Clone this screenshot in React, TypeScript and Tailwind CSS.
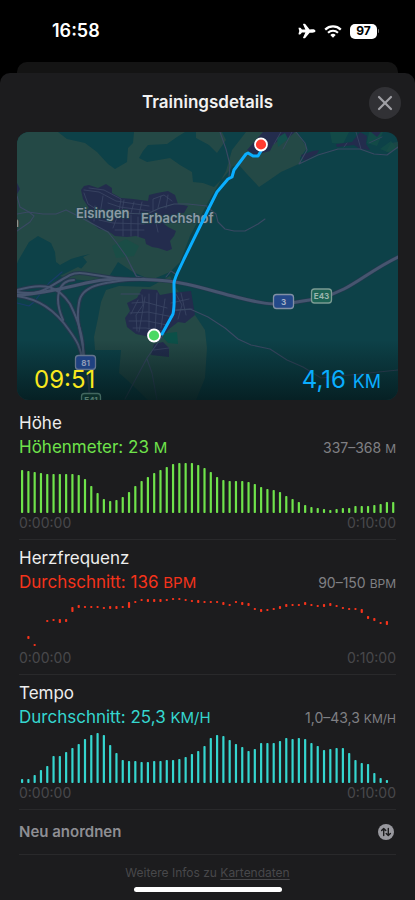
import { X } from 'lucide-react';
import { IoAirplane } from 'react-icons/io5';

type Range = [number, number, number];

const STEP = 6.29;
const CHART_HEIGHT = 54;

const elevation = [
  43, 42, 41, 40, 39, 39, 39, 39, 39, 38, 34, 27, 20, 14, 12, 13, 16, 21, 27, 32, 36, 40, 43, 46,
  49, 50, 50, 50, 48, 45, 41, 36, 33, 32, 32, 32, 31, 29, 26, 24, 23, 21, 17, 14, 11, 8, 6, 5, 4, 3,
  4, 5, 5, 7, 7, 7, 8, 9, 11, 11,
];

const tempo = [
  4, 4, 8, 13, 17, 27, 27, 31, 35, 39, 44, 48, 50, 48, 38, 30, 23, 22, 22, 21, 21, 22, 22, 23, 23,
  24, 26, 29, 32, 37, 45, 48, 47, 43, 39, 36, 32, 34, 40, 40, 40, 42, 45, 44, 45, 44, 40, 37, 33,
  34, 35, 35, 30, 23, 20, 19, 10, 5, 3,
];

// index, lower and upper edge of each sample above the axis
const heartRate: Range[] = [
  [1, 9, 12], [2, 2, 4], [4, 26, 28], [5, 27, 29], [6, 25, 29], [7, 26, 29], [8, 36, 41],
  [9, 40, 43], [10, 40, 42], [11, 40, 42], [12, 40, 42], [13, 39, 41], [14, 39, 42], [15, 39, 42],
  [16, 40, 42], [17, 40, 46], [18, 45, 47], [19, 47, 49], [20, 46, 49], [21, 46, 49],
  [22, 46, 49], [23, 47, 49], [24, 48, 50], [25, 48, 50], [26, 47, 49], [27, 46, 48],
  [28, 45, 48], [29, 45, 47], [30, 45, 47], [31, 45, 47], [32, 43, 46], [33, 42, 44],
  [34, 45, 47], [35, 43, 46], [36, 42, 45], [37, 38, 40], [38, 36, 39], [39, 37, 39],
  [40, 38, 40], [41, 39, 42], [42, 41, 44], [43, 42, 44], [44, 42, 44], [45, 43, 46],
  [46, 42, 44], [47, 41, 43], [48, 41, 44], [49, 42, 45], [50, 41, 43], [51, 39, 41],
  [52, 38, 40], [53, 38, 40], [54, 35, 39], [55, 29, 32], [56, 27, 30], [57, 24, 26],
  [58, 23, 27],
];

const toBars = (values: number[]): Range[] => values.map((v, i) => [i, 0, v]);

const metrics = [
  {
    title: 'Höhe',
    label: 'Höhenmeter: 23 ',
    unit: 'M',
    range: '337–368 ',
    color: 'text-[#6fe34b]',
    data: toBars(elevation),
  },
  {
    title: 'Herzfrequenz',
    label: 'Durchschnitt: 136 ',
    unit: 'BPM',
    range: '90–150 ',
    color: 'text-[#f5331b]',
    data: heartRate,
  },
  {
    title: 'Tempo',
    label: 'Durchschnitt: 25,3 ',
    unit: 'KM/H',
    range: '1,0–43,3 ',
    color: 'text-[#35d6cf]',
    data: toBars(tempo),
  },
];

function StatusBar() {
  return (
    <div className="flex h-[62px] items-center justify-between pr-9 pl-[52px] text-white">
      <span className="text-lg font-semibold">16:58</span>
      <div className="flex items-center gap-2">
        <IoAirplane className="h-[18px] w-[18px]" />
        <svg viewBox="0 0 18 13" className="h-[13px] w-[18px]" fill="none" stroke="currentColor">
          <path d="M1.2 4.6a11.2 11.2 0 0 1 15.6 0" strokeWidth="2.3" />
          <path d="M4 7.7a7.2 7.2 0 0 1 10 0" strokeWidth="2.1" />
          <path d="M9 12.8 6.3 10.1a3.9 3.9 0 0 1 5.4 0z" fill="currentColor" stroke="none" />
        </svg>
        <div className="flex items-center gap-px">
          <span className="flex h-[15px] w-[27px] items-center justify-center rounded-[5px] bg-white text-xs font-bold text-black">
            97
          </span>
          <span className="h-1 w-px rounded-r bg-neutral-500" />
        </div>
      </div>
    </div>
  );
}

function RouteMap() {
  return (
    <svg
      viewBox="17 132 381 268"
      preserveAspectRatio="xMidYMid slice"
      className="h-full w-full"
      fill="none"
      strokeLinejoin="round"
      strokeLinecap="round"
    >
      <defs>
        <linearGradient id="fade" x1="0" y1="0" x2="0" y2="1">
          <stop offset="0" stopColor="#04181b" stopOpacity="0" />
          <stop offset="1" stopColor="#04181b" stopOpacity="0.8" />
        </linearGradient>
      </defs>
      <rect x="17" y="132" width="381" height="268" fill="#0d4148" />

      {/* open land */}
      <g fill="#244946">
        <path d="M17 132H58L67 139 85 143 97 152 108 164 115 169 127 162 128 148 133 143 134 132H185L177 137 167 144 148 145 143 151 139 158 147 162 170 158 180 165 192 172 193 182 203 183 214 187 224 177 233 166 239 165 246 173 259 187 268 181 281 172 301 163 300 158 307 148 297 132H246L232 150 226 171 217 187 207 204 190 236 180 262 170 272 151 280 133 272 118 262 110 275 92 282 80 270 87 262 83 257 90 254 81 256 71 259 60 265 56 262 55 252 51 243 38 236 29 242 18 261 17 264Z" />
        <path d="M196 132H222L226 140 217 153 209 145 196 138Z" />
        <path d="M106 290 119 286 150 287 170 276 176 288 195 315 205 330 207 348 205 378 196 400H148L126 379 119 373 121 350 95 350 94 337 98 318 101 302Z" />
        <path d="M60 276 78 267 96 276 92 281 70 279Z" />
        <path d="M386 152 391 143 398 142V149Z" opacity="0.6" />
      </g>
      <g fill="#165047" opacity="0.65">
        <path d="M112 246 126 239 139 246 134 256 116 258Z" />
        <path d="M330 132H349L343 144 332 143ZM369 132H383L377 146 367 143ZM380 149 391 141 396 147 390 153Z" />
      </g>

      {/* built-up areas */}
      <g fill="#232c4d">
        <path d="M81 190 84 186 89 185 98 188 106 184 112 188 112 193 121 198 133 199 148 201 149 195 157 193 168 191 175 195 178 204 188 206 184 213 177 214 177 221 164 224 168 227 176 231 174 236 170 241 172 249 167 251 158 248 152 247 146 244 145 239 136 236 127 237 115 236 108 231 99 229 92 223 86 218 84 212 89 208 83 199Z" />
        <path d="M142 289 157 290 160 295 171 293 191 291 195 315 185 323 178 322 169 329 162 338 150 337 136 334 127 327 125 318 130 311 127 303 137 298Z" />
        <path d="M154 344 163 342 169 348V357L151 355Z" />
        <path d="M263 132H295L286 140 281 138 273 145 270 151 255 155 247 150 255 141Z" />
        <path d="M301 155 313 151 319 150 317 154 304 161Z" />
        <path d="M336 144 352 142 360 132 367 136 366 144 370 150 360 149 354 145 337 147ZM371 132 381 132 377 137Z" />
        <path d="M17 183 20 189 17 194Z" />
      </g>
      <path d="M160 334 177 332 178 344 168 343Z" fill="#0b5048" />
      <path d="M277 138 285 133 288 139 278 147Z" fill="#13504c" />

      {/* local streets */}
      <g stroke="#3b4664" strokeWidth="0.8">
        <path d="M84 190 99 192 116 201 149 206M84 193 88 204 101 212 118 214M89 188 104 190 121 199 119 212 113 228M95 206 94 221M103 196 100 214M108 203 120 207 150 211M124 200 122 211M134 202 131 213M142 202 139 214M99 220 113 223 144 224M123 216V236M131 215V236M138 217V237M115 230H144M153 211 153 199 164 195 172 201M161 196 158 208M168 195 166 208M156 223 158 232" />
        <path d="M142 295 143 305 136 315 137 331M149 294 149 334M157 293 155 333M132 303 145 302 167 308M130 313 148 312 173 317M129 321 147 321 167 325M133 328 146 328 162 331M138 300 131 314M145 297 139 332M165 299 161 328M176 294 182 305 178 319M171 303 189 299M172 311 192 309M181 293 186 315M154 350 169 348" />
        <path d="M281 132 274 144M292 132 283 149M356 132 361 149M344 147 347 143M369 143 382 137" />
      </g>

      {/* country roads */}
      <g stroke="#3a4963" strokeWidth="1.1">
        <path d="M17 214 28 212 43 214 56 214 66 210 76 215 91 223 108 232 116 242 126 256 132 268 137 277" />
        <path d="M17 196 20 207 29 212 34 216 30 222 17 231" />
        <path d="M118 213 147 214 160 208 174 204 188 204 207 206" />
        <path d="M220 132 226 149 230 165 229 177M207 207 216 214 218 222 225 229 234 231 245 231 258 224 265 219" />
        <path d="M296 132 305 143 307 150 299 164 318 155 338 149 360 149 374 154 387 155 398 147" />
        <path d="M175 310 190 309 208 317 225 328 238 339 251 345 270 349 287 360 303 367 321 378 398 370" />
        <path d="M125 399 147 358 164 334M147 359 152 373 157 400M131 266 136 276 150 279M166 277 171 271 177 275M121 294H140" />
      </g>

      <path d="M17 303 29 306 34 302 41 293 49 283 62 272" stroke="#193c69" strokeWidth="1.2" />

      {/* motorways */}
      <g stroke="#25384e" strokeWidth="4">
        <path d="M17 295C35 295 61 289 86 283S128 279 155 280 205 289 236 297 275 307 320 298C350 291 365 273 398 257" />
        <path d="M17 292C43 296 46 288 70 275 82 269 103 279 130 279" />
        <path d="M17 290C45 282 58 286 70 304 78 320 84 336 83 354M17 296C40 299 56 311 69 330 77 341 81 348 82 360" />
        <path d="M140 279C100 282 81 286 79 303 75 324 83 336 84 357M63 320C53 297 59 280 74 280" />
      </g>
      <g stroke="#46556f" strokeWidth="2">
        <path d="M17 295C35 295 61 289 86 283S128 279 155 280 205 289 236 297 275 307 320 298C350 291 365 273 398 257" strokeWidth="3" />
        <path d="M17 292C43 296 46 288 70 275 82 269 103 279 130 279" />
        <path d="M17 290C45 282 58 286 70 304 78 320 84 336 83 354M17 296C40 299 56 311 69 330 77 341 81 348 82 360" />
        <path d="M140 279C100 282 81 286 79 303 75 324 83 336 84 357M63 320C53 297 59 280 74 280M88 376 90 400" />
      </g>

      <rect x="17" y="340" width="381" height="60" fill="url(#fade)" />

      {/* road shields */}
      <g strokeWidth="1.3" textAnchor="middle" fontWeight="700">
        <rect x="75.5" y="355.5" width="20" height="14" rx="3" fill="#1f4180" stroke="#64748c" />
        <rect x="273.5" y="294.5" width="20" height="14" rx="3" fill="#24498a" stroke="#8190a5" />
        <rect x="311.5" y="289" width="20" height="14" rx="3" fill="#1d6355" stroke="#7b9b93" />
        <rect x="81.5" y="393.5" width="19" height="13" rx="3" fill="#0d2f2a" stroke="#42675f" />
        <g fontSize="8">
          <text x="85.5" y="365.5" fill="#8e9bb8">81</text>
          <text x="283.5" y="304.5" fill="#a8b3c6">3</text>
          <text x="321.5" y="299" fill="#9bb5ae">E43</text>
          <text x="91" y="403" fill="#55796f">E41</text>
        </g>
      </g>

      <g fill="#8d9aa6" stroke="#20434a" strokeWidth="1.5" paintOrder="stroke" fontSize="13" fontWeight="600">
        <text x="76" y="218">Eisingen</text>
        <text x="141" y="223">Erbachshof</text>
        <text x="11" y="227">n</text>
      </g>

      {/* recorded track */}
      <path
        d="M162 334 173 314C175 305 174 296 174 283 175 276 180 268 184 259L207 212 217 192 228 179 232 177 234 170 246 154 248 153 253 156 258 156 261 151"
        stroke="#0aaeff"
        strokeWidth="3"
      />
      <g stroke="#fff" strokeWidth="1.8">
        <circle cx="154" cy="335.5" r="6" fill="#4bd964" />
        <circle cx="261" cy="144.5" r="6" fill="#ff3b30" />
      </g>
    </svg>
  );
}

function Chart({ data, color, title }: { data: Range[]; color: string; title: string }) {
  return (
    <svg
      viewBox="0 0 377 54"
      preserveAspectRatio="none"
      role="img"
      aria-label={title}
      className={`block h-[54px] w-full ${color}`}
      fill="currentColor"
    >
      {data.map(([i, low, high]) => (
        <rect
          key={i}
          x={2 + i * STEP}
          y={CHART_HEIGHT - high}
          width="2.2"
          height={high - low}
          rx="0.8"
        />
      ))}
    </svg>
  );
}

export default function App() {
  return (
    <div className="flex min-h-screen flex-col bg-black font-['Inter','Noto_Sans',sans-serif]">
      <StatusBar />
      <div className="mx-[17px] h-[11px] rounded-t-[10px] bg-[#141414]" />

      <main className="flex grow flex-col rounded-t-[10px] bg-[#1c1c1e]">
        <header className="grid h-[59px] grid-cols-[1fr_auto_1fr] items-center px-3.5">
          <h1 className="col-start-2 text-[17px] font-semibold text-[#f2f2f2]">Trainingsdetails</h1>
          <button
            type="button"
            aria-label="Schließen"
            className="flex h-8 w-8 items-center justify-center justify-self-end rounded-full bg-[#313135] text-[#a0a0a6]"
          >
            <X className="h-6 w-6" strokeWidth={2.2} />
          </button>
        </header>

        <div className="relative mx-[17px] h-[268px] overflow-hidden rounded-xl">
          <RouteMap />
          <div className="absolute inset-x-[17px] bottom-1.5 flex items-baseline justify-between text-2xl leading-7">
            <span className="text-[#f9e81e]">09:51</span>
            <span className="text-[#0aaeff]">
              4,16 <span className="text-lg leading-6">KM</span>
            </span>
          </div>
        </div>

        <div className="mt-[5px] px-[19px]">
          {metrics.map(({ title, label, unit, range, color, data }) => (
            <section key={title} className="border-b border-[#29292b] pt-1.5 pb-1.5">
              <h2 className="text-[17px] leading-6 text-[#ededed]">{title}</h2>
              <div className="flex h-6 items-baseline justify-between">
                <p className={`text-[17px] leading-6 ${color}`}>
                  {label}
                  <span className="text-[15px] leading-5">{unit}</span>
                </p>
                <p className="text-sm text-[#808084]">
                  {range}
                  <span className="text-xs">{unit}</span>
                </p>
              </div>
              <Chart data={data} color={color} title={title} />
              <div className="flex justify-between text-sm text-[#48484b]">
                <span>0:00:00</span>
                <span>0:10:00</span>
              </div>
            </section>
          ))}

          <button
            type="button"
            className="flex h-[45px] w-full items-center justify-between border-b border-[#29292b] text-[15px] font-semibold text-[#8e8e93]"
          >
            Neu anordnen
            <svg viewBox="0 0 16 16" className="mr-0.5 h-4 w-4" fill="none">
              <circle cx="8" cy="8" r="8" fill="#98989e" />
              <path
                d="M5.7 11.5V4.7M3.6 6.6 5.7 4.5 7.8 6.6M10.3 4.5V11.3M8.2 9.4 10.3 11.5 12.4 9.4"
                stroke="#1c1c1e"
                strokeWidth="1.4"
                strokeLinecap="round"
                strokeLinejoin="round"
              />
            </svg>
          </button>
        </div>

        <footer className="flex flex-col items-center pt-2">
          <p className="text-xs leading-5 text-[#48484b]">
            Weitere Infos zu{' '}
            <a href="#kartendaten" className="underline underline-offset-2">
              Kartendaten
            </a>
          </p>
          <div className="mt-1 h-[5px] w-[148px] rounded-full bg-white" />
        </footer>
      </main>
    </div>
  );
}
